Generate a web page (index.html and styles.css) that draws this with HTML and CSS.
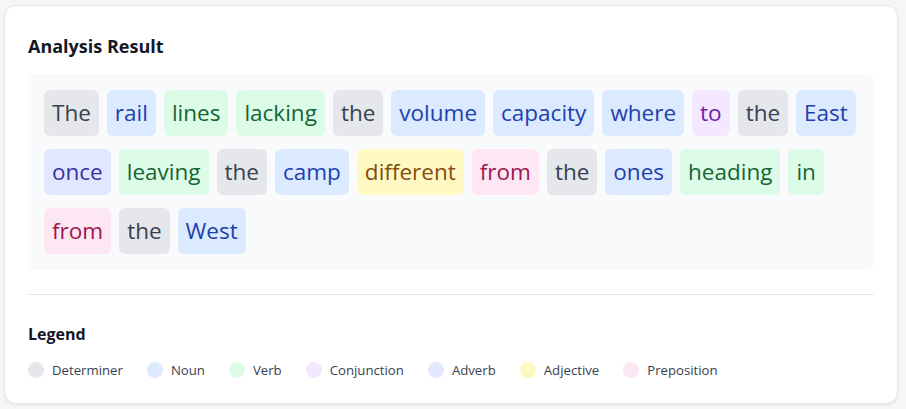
FILE: index.html
```html
<!DOCTYPE html>
<html lang="en">

<head>
    <meta charset="UTF-8">
    <meta name="viewport" content="width=device-width, initial-scale=1.0">
    <title>Analysis Result</title>
    <link rel="stylesheet" href="styles.css">
</head>

<body>

    <div class="card">
        <h2 class="card-title">Analysis Result</h2>

        <div class="tokens">
            <span class="token det">The</span>
            <span class="token noun">rail</span>
            <span class="token verb">lines</span>
            <span class="token verb">lacking</span>
            <span class="token det">the</span>
            <span class="token noun">volume</span>
            <span class="token noun">capacity</span>
            <span class="token noun">where</span>
            <span class="token conj">to</span>
            <span class="token det">the</span>
            <span class="token noun">East</span>
            <span class="token adv">once</span>
            <span class="token verb">leaving</span>
            <span class="token det">the</span>
            <span class="token noun">camp</span>
            <span class="token adj">different</span>
            <span class="token prep">from</span>
            <span class="token det">the</span>
            <span class="token noun">ones</span>
            <span class="token verb">heading</span>
            <span class="token verb">in</span>
            <span class="token prep">from</span>
            <span class="token det">the</span>
            <span class="token noun">West</span>
        </div>

        <hr class="divider">

        <h3 class="legend-title">Legend</h3>
        <div class="legend">
            <div class="legend-item"><span class="dot det"></span>Determiner</div>
            <div class="legend-item"><span class="dot noun"></span>Noun</div>
            <div class="legend-item"><span class="dot verb"></span>Verb</div>
            <div class="legend-item"><span class="dot conj"></span>Conjunction</div>
            <div class="legend-item"><span class="dot adv"></span>Adverb</div>
            <div class="legend-item"><span class="dot adj"></span>Adjective</div>
            <div class="legend-item"><span class="dot prep"></span>Preposition</div>
        </div>
    </div>

</body>

</html>
```

FILE: styles.css
```css
* {
    box-sizing: border-box;
}

body {
    font-family: "Open Sans", "Noto Sans", sans-serif;
    margin: 0;
    padding: 5px 8px 5px 4px;
    background-color: #f5f6f8;
}

.card {
    background-color: #ffffff;
    border: 1px solid #e5e7eb;
    border-radius: 12px;
    box-shadow: 0 1px 3px rgba(0, 0, 0, 0.08);
    padding: 23px 23px 24px;
    height: 399px;
}

.card-title {
    font-size: 18px;
    font-weight: 700;
    color: #111827;
    margin: 3px 0 14px;
    line-height: 28px;
}

.tokens {
    display: flex;
    flex-wrap: wrap;
    gap: 13px 8px;
    background-color: #f9fafb;
    border-radius: 8px;
    padding: 16px;
}

.token {
    font-size: 22.5px;
    line-height: 34px;
    padding: 6px 8px;
    border-radius: 6px;
}

.divider {
    border: 0;
    border-top: 1px solid #e5e7eb;
    margin: 24px 0 27px;
}

.legend-title {
    font-size: 16px;
    font-weight: 700;
    color: #111827;
    margin: 0 0 15px;
    line-height: 24px;
}

.legend {
    display: flex;
    flex-wrap: wrap;
    gap: 24px;
}

.legend-item {
    display: flex;
    align-items: center;
    gap: 8px;
    font-size: 13.2px;
    color: #374151;
}

.dot {
    width: 16px;
    height: 16px;
    border-radius: 50%;
}

.det { background-color: #e5e7eb; color: #374151; }
.noun { background-color: #dbeafe; color: #1e40af; }
.verb { background-color: #dcfce7; color: #166534; }
.conj { background-color: #f3e8ff; color: #6b21a8; }
.adv { background-color: #e0e7ff; color: #3730a3; }
.adj { background-color: #fef9c3; color: #854d0e; }
.prep { background-color: #fce7f3; color: #9d174d; }
```
